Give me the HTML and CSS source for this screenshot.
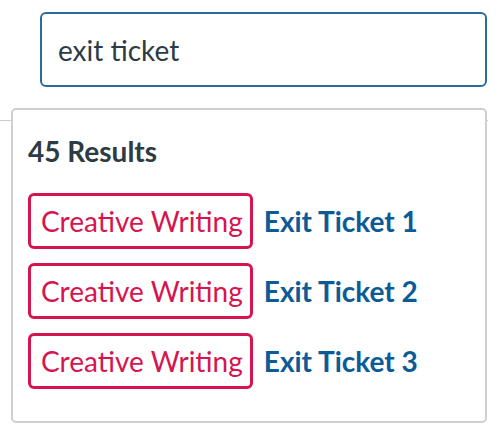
FILE: index.html
```html
<!DOCTYPE html>
<html>
<head>
<meta charset="utf-8">
<link rel="stylesheet" href="styles.css">
</head>
<body>
<div class="page">
  <div class="search-row">
    <div class="search-box">exit ticket</div>
  </div>
  <div class="divider"></div>
  <div class="dropdown">
    <div class="count">45 Results</div>
    <div class="results">
      <div class="result"><span class="tag">Creative Writing</span><span class="title">Exit Ticket 1</span></div>
      <div class="result"><span class="tag">Creative Writing</span><span class="title">Exit Ticket 2</span></div>
      <div class="result"><span class="tag">Creative Writing</span><span class="title">Exit Ticket 3</span></div>
    </div>
  </div>
</div>
</body>
</html>
```
FILE: styles.css
```css
html, body {
  margin: 0;
  padding: 0;
  background: #ffffff;
}
body {
  font-family: Lato, "Noto Sans", sans-serif;
  color: #2d3b45;
  width: 500px;
  height: 436px;
  overflow: hidden;
}
.page {
  position: relative;
  height: 436px;
}
.search-row {
  padding: 12px 13px 0 40px;
}
.search-box {
  height: 71px;
  border: 2px solid #2b6a9f;
  border-radius: 6px;
  display: flex;
  align-items: center;
  padding-left: 16px;
  font-size: 28px;
  color: #2d3b45;
}
.divider {
  margin-top: 33px;
  height: 1px;
  width: 488px;
  background: #c7cdd1;
}
.dropdown {
  position: absolute;
  left: 11px;
  top: 108px;
  width: 457px;
  height: 311px;
  border: 2px solid #cfcfcf;
  border-radius: 5px;
  background: #ffffff;
  padding: 0 0 0 15px;
}
.count {
  font-weight: bold;
  font-size: 28px;
  margin-top: 25px;
  line-height: 32px;
}
.results {
  margin-top: 26px;
  display: flex;
  flex-direction: column;
  gap: 14px;
}
.result {
  display: flex;
  align-items: center;
  gap: 11px;
}
.tag {
  border: 3px solid #d6154f;
  border-radius: 6px;
  color: #d6154f;
  font-size: 28px;
  height: 50px;
  display: flex;
  align-items: center;
  padding: 0 7px 0 10px;
}
.title {
  color: #0c5b96;
  font-weight: bold;
  font-size: 28px;
}
```
